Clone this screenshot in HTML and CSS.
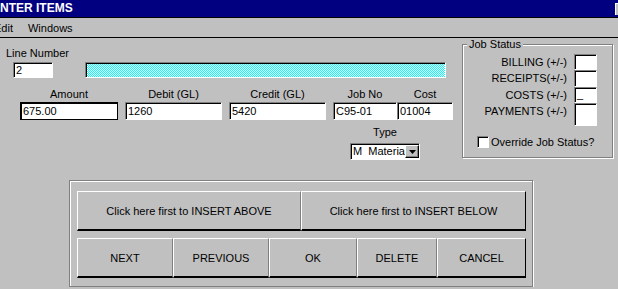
FILE: index.html
```html
<!DOCTYPE html>
<html lang="en">
<head>
  <meta charset="UTF-8">
  <title>Enter Items</title>
  <link rel="stylesheet" href="styles.css">
</head>
<body>

  <div class="titlebar">
    <span class="title">ENTER ITEMS</span>
    <span class="sysbtn"></span>
  </div>
  <div class="menubar">
    <span class="menu menu-edit">Edit</span>
    <span class="menu">Windows</span>
  </div>

  <div class="client">
    <div class="form-top">
      <div class="fields">
        <div class="line-label">Line Number</div>
        <div class="line-row">
          <input class="field line-no" type="text" value="2">
          <div class="field progress">
            <svg width="100%" height="100%">
              <defs>
                <pattern id="dither" width="2" height="2" patternUnits="userSpaceOnUse">
                  <rect width="2" height="2" fill="#00ffff"/>
                  <rect width="1" height="1" fill="#ffffff"/>
                  <rect x="1" y="1" width="1" height="1" fill="#ffffff"/>
                </pattern>
              </defs>
              <rect width="100%" height="100%" fill="url(#dither)"/>
            </svg>
          </div>
        </div>

        <div class="entry-row">
          <div class="col col-amount"><label>Amount</label><input class="field focused" type="text" value="675.00"></div>
          <div class="col col-debit"><label>Debit (GL)</label><input class="field" type="text" value="1260"></div>
          <div class="col col-credit"><label>Credit (GL)</label><input class="field" type="text" value="5420"></div>
          <div class="col col-job"><label>Job No</label><input class="field" type="text" value="C95-01"></div>
          <div class="col col-cost"><label>Cost</label><input class="field" type="text" value="01004"></div>
        </div>

        <div class="col type-col">
          <label>Type</label>
          <div class="field combo">
            <span class="combo-text">M&nbsp;&nbsp;Material</span>
            <span class="combo-btn">
              <svg width="7" height="4" viewBox="0 0 7 4"><polygon points="0,0 7,0 3.5,4" fill="#000"/></svg>
            </span>
          </div>
        </div>
      </div>

      <fieldset class="job-status">
        <legend>Job Status</legend>
        <div class="status-grid">
          <span class="status-label">BILLING (+/-)</span><div class="field box"></div>
          <span class="status-label">RECEIPTS(+/-)</span><div class="field box"></div>
          <span class="status-label">COSTS (+/-)</span><div class="field box">_</div>
          <span class="status-label">PAYMENTS (+/-)</span><div class="field box"></div>
        </div>
        <label class="check"><span class="field checkbox"></span>Override Job Status?</label>
      </fieldset>
    </div>

    <div class="button-panel">
      <div class="btn-row">
        <button class="btn w-above">Click here first to INSERT ABOVE</button>
        <button class="btn w-below">Click here first to INSERT BELOW</button>
      </div>
      <div class="btn-row">
        <button class="btn w-next">NEXT</button>
        <button class="btn w-prev">PREVIOUS</button>
        <button class="btn w-ok">OK</button>
        <button class="btn w-delete">DELETE</button>
        <button class="btn w-cancel">CANCEL</button>
      </div>
    </div>
  </div>

</body>
</html>
```

FILE: styles.css
```css
body {
  margin: 0;
  background-color: #c0c0c0;
  color: #000;
  font-family: "Liberation Sans", Arial, sans-serif;
  font-size: 11px;
  overflow: hidden;
}
.titlebar {
  height: 17px;
  background-color: #000080;
  border-bottom: 1px solid #000;
  display: flex;
  justify-content: space-between;
  align-items: center;
}
.title {
  color: #fff;
  font-weight: bold;
  font-size: 12px;
  line-height: 17px;
  margin-left: -8px;
}
.sysbtn {
  width: 12px;
  height: 11px;
  background-color: #c0c0c0;
  border-top: 1px solid #fff;
  border-left: 1px solid #fff;
  margin-right: -10px;
}
.menubar {
  height: 19px;
  border-bottom: 1px solid #000;
  display: flex;
  align-items: center;
}
.menu-edit {
  margin-left: -6px;
}
.menu + .menu {
  margin-left: 15px;
}

/* sunken white fields */
.field {
  box-sizing: border-box;
  background-color: #fff;
  border-top: 1px solid #808080;
  border-left: 1px solid #808080;
  border-right: 1px solid #fff;
  border-bottom: 1px solid #fff;
  box-shadow: inset 1px 1px 0 #000;
}
input.field {
  font-family: inherit;
  font-size: 11px;
  color: #000;
  padding: 0 0 0 2px;
  outline: none;
}
.field.focused {
  border: 1px solid #000;
}

.form-top {
  display: flex;
  height: 142px;
}
.fields {
  width: 455px;
}
.line-label {
  margin: 9px 0 0 6px;
  line-height: 13px;
}
.line-row {
  display: flex;
  margin-top: 2px;
}
.line-row .line-no {
  margin: 0 0 0 13px;
  width: 40px;
  height: 16px;
}
.progress {
  margin-left: 32px;
  width: 361px;
  height: 16px;
  padding: 1px 0 0 1px;
}
.progress svg {
  display: block;
}
.entry-row {
  display: flex;
  margin-top: 10px;
}
.col {
  display: flex;
  flex-direction: column;
  align-items: center;
}
.col label {
  line-height: 13px;
  margin-bottom: 1px;
}
.col input {
  width: 100%;
  height: 18px;
  margin: 0;
}
.col-amount { width: 98px; margin-left: 20px; }
.col-debit { width: 97px; margin-left: 7px; }
.col-credit { width: 97px; margin-left: 7px; }
.col-job { width: 64px; margin-left: 7px; }
.col-cost { width: 56px; }

.type-col {
  width: 70px;
  margin: 6px 0 0 350px;
}
.type-col label {
  margin-bottom: 4px;
}
.combo {
  width: 70px;
  height: 17px;
  display: flex;
  align-items: center;
  padding: 1px 0 1px 2px;
}
.combo-text {
  flex: 1;
  overflow: hidden;
  white-space: nowrap;
  line-height: 13px;
}
.combo-btn {
  box-sizing: border-box;
  width: 14px;
  height: 13px;
  background-color: #c0c0c0;
  border-top: 1px solid #fff;
  border-left: 1px solid #fff;
  border-right: 1px solid #000;
  border-bottom: 1px solid #000;
  box-shadow: inset -1px -1px 0 #808080;
  display: flex;
  align-items: center;
  justify-content: center;
}

.job-status {
  box-sizing: border-box;
  width: 151px;
  height: 120px;
  min-width: 0;
  margin: 0 0 0 7px;
  padding: 3px 0 0 0;
  border: 1px solid #808080;
  box-shadow: 1px 1px 0 #fff, inset 1px 1px 0 #fff;
}
.job-status legend {
  margin-left: 4px;
  padding: 0 2px;
  line-height: 13px;
  background-color: #c0c0c0;
}
.status-grid {
  display: grid;
  grid-template-columns: 104px 23px;
  grid-template-rows: 16px 17px 16px 23px;
  column-gap: 7px;
}
.status-label {
  text-align: right;
  line-height: 16px;
  white-space: nowrap;
}
.box {
  line-height: 12px;
  padding-left: 2px;
}
.check {
  display: flex;
  align-items: center;
  margin: 10px 0 0 14px;
}
.checkbox {
  width: 12px;
  height: 12px;
  margin-right: 2px;
}

.button-panel {
  box-sizing: border-box;
  width: 464px;
  height: 107px;
  margin-left: 69px;
  padding: 10px 6px 0 7px;
  border: 1px solid #808080;
  box-shadow: 1px 1px 0 #fff, inset 1px 1px 0 #fff;
}
.btn-row {
  display: flex;
  height: 40px;
}
.btn-row + .btn-row {
  margin-top: 7px;
}
.btn {
  box-sizing: border-box;
  height: 40px;
  padding: 0;
  margin: 0;
  background-color: #c0c0c0;
  color: #000;
  font-family: inherit;
  font-size: 11px;
  border-top: 1px solid #fff;
  border-left: 1px solid #fff;
  border-right: 1px solid #808080;
  border-bottom: 2px solid #000;
  border-radius: 0;
}
.btn:last-child {
  border-right: 1px solid #000;
}
.w-above { width: 224px; }
.w-below { width: 225px; }
.w-next { width: 96px; }
.w-prev { width: 96px; }
.w-ok { width: 88px; }
.w-delete { width: 80px; }
.w-cancel { width: 89px; }
```
